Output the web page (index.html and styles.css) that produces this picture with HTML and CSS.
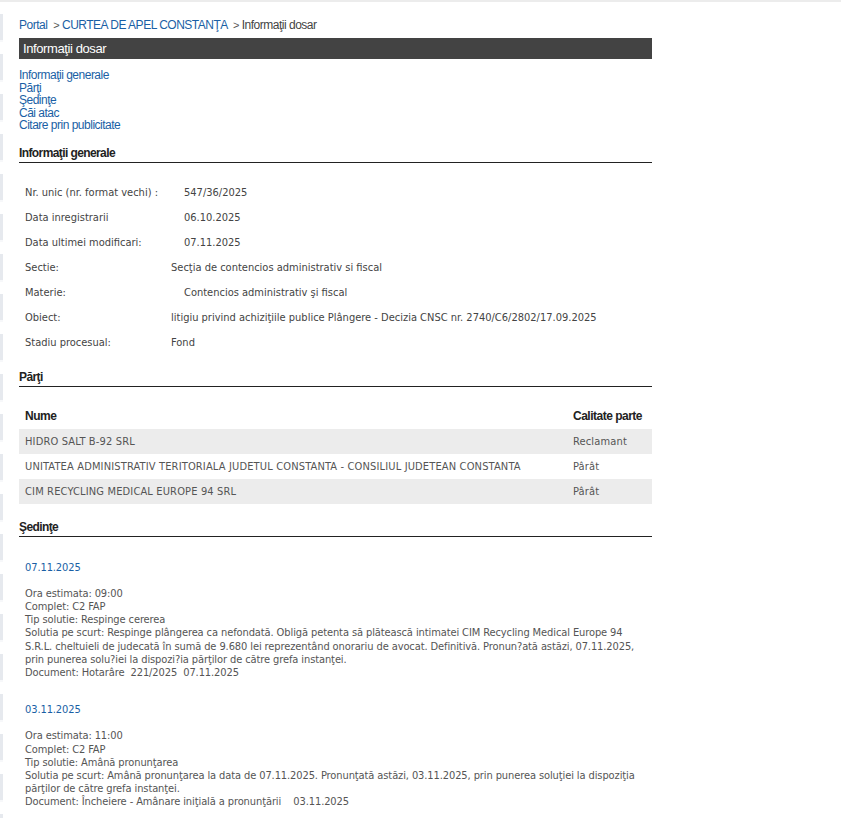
FILE: index.html
```html
<!DOCTYPE html>
<html lang="ro">
<head>
  <meta charset="utf-8">
  <title>Informaţii dosar</title>
  <link rel="stylesheet" href="styles.css">
</head>
<body>
  <div class="page">
    <!-- breadcrumb -->
    <div class="crumbs">
      <a href="#">Portal</a>
      <span class="sep">&gt;</span>
      <a href="#">CURTEA DE APEL CONSTANŢA</a>
      <span class="sep">&gt;</span>
      <span class="here">Informaţii dosar</span>
    </div>

    <h1 class="bar">Informaţii dosar</h1>

    <ul class="toc">
      <li><a href="#generale">Informaţii generale</a></li>
      <li><a href="#parti">Părţi</a></li>
      <li><a href="#sedinte">Şedinţe</a></li>
      <li><a href="#">Căi atac</a></li>
      <li><a href="#">Citare prin publicitate</a></li>
    </ul>

    <h2 class="sect first" id="generale">Informaţii generale</h2>
    <table class="info">
      <tr><td class="lbl">Nr. unic (nr. format vechi) :</td><td class="val ind">547/36/2025</td></tr>
      <tr><td class="lbl">Data inregistrarii</td><td class="val ind">06.10.2025</td></tr>
      <tr><td class="lbl">Data ultimei modificari:</td><td class="val ind">07.11.2025</td></tr>
      <tr><td class="lbl">Sectie:</td><td class="val">Secţia de contencios administrativ si fiscal</td></tr>
      <tr><td class="lbl">Materie:</td><td class="val ind">Contencios administrativ şi fiscal</td></tr>
      <tr><td class="lbl">Obiect:</td><td class="val">litigiu privind achiziţiile publice Plângere - Decizia CNSC nr. 2740/C6/2802/17.09.2025</td></tr>
      <tr><td class="lbl">Stadiu procesual:</td><td class="val">Fond</td></tr>
    </table>

    <h2 class="sect" id="parti">Părţi</h2>
    <table class="parti">
      <tr><th>Nume</th><th class="cal">Calitate parte</th></tr>
      <tr class="odd"><td>HIDRO SALT B-92 SRL</td><td class="cal">Reclamant</td></tr>
      <tr><td>UNITATEA ADMINISTRATIV TERITORIALA JUDETUL CONSTANTA - CONSILIUL JUDETEAN CONSTANTA</td><td class="cal">Pârât</td></tr>
      <tr class="odd"><td>CIM RECYCLING MEDICAL EUROPE 94 SRL</td><td class="cal">Pârât</td></tr>
    </table>

    <h2 class="sect last" id="sedinte">Şedinţe</h2>
    <div class="sedinta">
      <div class="data">07.11.2025</div>
      <div class="det">
        Ora estimata: 09:00<br>
        Complet: C2 FAP<br>
        Tip solutie: Respinge cererea<br>
        Solutia pe scurt: Respinge plângerea ca nefondată. Obligă petenta să plătească intimatei CIM Recycling Medical Europe 94 S.R.L. cheltuieli de judecată în sumă de 9.680 lei reprezentând onorariu de avocat. Definitivă. Pronun?ată astăzi, 07.11.2025, prin punerea solu?iei la dispozi?ia părţilor de către grefa instanţei.<br>
        Document: Hotarâre&nbsp; 221/2025&nbsp; 07.11.2025
      </div>
    </div>
    <div class="sedinta">
      <div class="data">03.11.2025</div>
      <div class="det">
        Ora estimata: 11:00<br>
        Complet: C2 FAP<br>
        Tip solutie: Amână pronunţarea<br>
        Solutia pe scurt: Amână pronunţarea la data de 07.11.2025. Pronunţată astăzi, 03.11.2025, prin punerea soluţiei la dispoziţia părţilor de către grefa instanţei.<br>
        Document: Încheiere - Amânare iniţială a pronunţării &nbsp;&nbsp; 03.11.2025
      </div>
    </div>
  </div>
</body>
</html>
```

FILE: styles.css
```css
* {
  margin: 0;
  padding: 0;
}
html {
  background: #fff;
}
body {
  border-top: 2px solid #ececec;
  font-family: "Liberation Sans", Arial, sans-serif;
  font-size: 12px;
  letter-spacing: -0.5px;
  color: #222;
  background-image: repeating-linear-gradient(to bottom, #fff 0 12px, #e6e9ee 12px 38px, #f7f8fa 38px 40px);
  background-size: 3px 100%;
  background-repeat: no-repeat;
  min-height: 816px;
}
a {
  color: #1a5fa5;
  text-decoration: none;
}
ul {
  list-style: none;
}
.page {
  width: 633px;
  padding: 16px 0 0 19px;
}
.crumbs {
  line-height: 15px;
  color: #444;
}
.crumbs .sep {
  margin: 0 0 0 3px;
  color: #555;
  font-size: 11px;
}
.bar {
  margin-top: 5px;
  height: 21px;
  padding-left: 4px;
  background-color: #434343;
  color: #fff;
  font-family: "Liberation Sans Narrow", "Liberation Sans", Arial, sans-serif;
  font-size: 13px;
  font-weight: normal;
  letter-spacing: -0.4px;
  line-height: 21px;
}
.toc {
  margin-top: 10px;
  line-height: 12.5px;
}
.sect {
  margin-top: 15px;
  padding-bottom: 2px;
  border-bottom: 1px solid #222;
  font-size: 12px;
  font-weight: bold;
  letter-spacing: -0.6px;
  line-height: 14px;
  color: #222;
}
.sect.first {
  margin-top: 14px;
}
.sect.last {
  margin-top: 16px;
}
.info,
.parti {
  width: 100%;
  border-collapse: collapse;
  font-family: "DejaVu Sans Condensed", "DejaVu Sans", sans-serif;
  font-size: 11px;
  letter-spacing: 0;
  color: #444;
}
.info {
  margin-top: 17px;
}
.info td {
  height: 25px;
  padding: 0 6px;
  vertical-align: middle;
  white-space: nowrap;
}
.info td.lbl {
  width: 134px;
}
.info td.ind {
  padding-left: 19px;
}
.parti {
  margin-top: 17px;
  color: #555;
}
.parti th,
.parti td {
  height: 25px;
  padding: 0 6px;
  text-align: left;
  vertical-align: middle;
  white-space: nowrap;
}
.parti td {
  letter-spacing: 0.15px;
}
.parti th {
  font-family: "Liberation Sans", Arial, sans-serif;
  font-size: 12px;
  letter-spacing: -0.5px;
  color: #222;
}
.parti .cal {
  width: 73px;
}
.parti tr.odd td {
  background-color: #ececec;
}
.sedinta {
  padding-left: 6px;
  font-family: "DejaVu Sans Condensed", "DejaVu Sans", sans-serif;
  font-size: 11px;
  letter-spacing: -0.1px;
  line-height: 13.2px;
  color: #555;
}
.sedinta + .sedinta {
  margin-top: 24px;
}
.sect + .sedinta {
  margin-top: 24px;
}
.sedinta .data {
  margin-bottom: 13px;
  color: #1a5fa5;
}
```
